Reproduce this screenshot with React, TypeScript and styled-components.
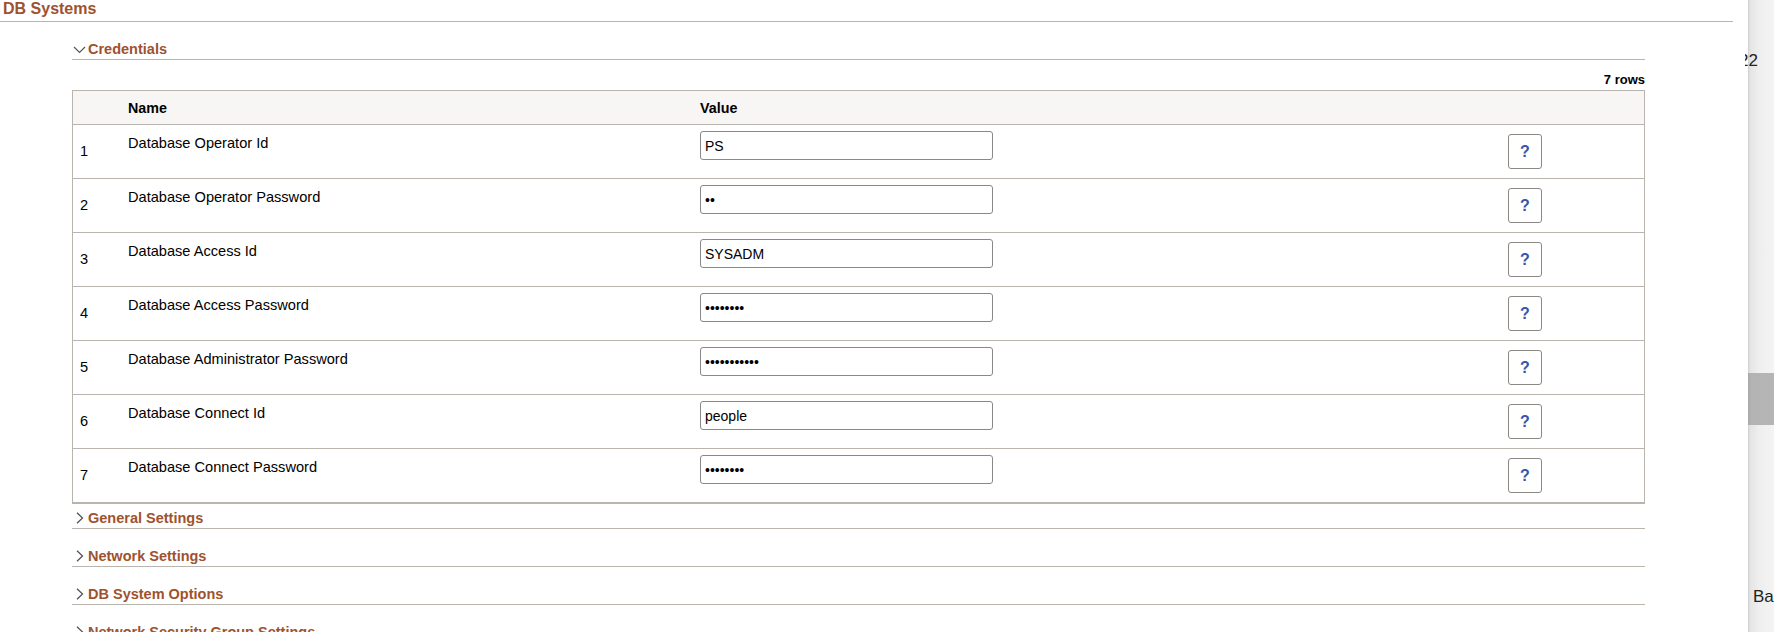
import React from "react";
import styled, { createGlobalStyle } from "styled-components";

const GlobalStyle = createGlobalStyle`
  html, body, #root { height: 100%; margin: 0; }
  body {
    font-family: "Liberation Sans", Arial, sans-serif;
    background: #ffffff;
    color: #000000;
    overflow: hidden;
  }
  * { box-sizing: border-box; }
`;

const BROWN = "#9e522e";
const LINE = "#b9b4ad";

const Page = styled.div`
  display: flex;
  height: 100%;
`;

const Main = styled.main`
  flex: 1;
  min-width: 0;
  padding-right: 15px;
`;

const PageTitle = styled.h1`
  margin: 0;
  padding: 0 0 3px 3px;
  font-size: 16px;
  line-height: 18px;
  font-weight: 700;
  color: ${BROWN};
  border-bottom: 1px solid ${LINE};
`;

const Sections = styled.div`
  margin: 0 88px 0 72px;
`;

const SectionHeader = styled.div<{ $tight?: boolean }>`
  display: flex;
  align-items: center;
  margin-top: ${(p) => (p.$tight ? "6px" : "19px")};
  padding-bottom: 2px;
  border-bottom: 1px solid ${LINE};
  font-size: 14.5px;
  line-height: 16px;
  font-weight: 700;
  color: ${BROWN};
  cursor: pointer;
`;

const Chevron = styled.svg`
  width: 16px;
  height: 16px;
  flex: none;
`;

const RowCount = styled.div`
  margin-top: 12px;
  text-align: right;
  font-size: 13px;
  line-height: 15px;
  font-weight: 700;
`;

const Grid = styled.div`
  margin-top: 3px;
  border: 1px solid ${LINE};
`;

const GridRow = styled.div<{ $head?: boolean }>`
  display: grid;
  grid-template-columns: 47px 572px 1fr 144px;
  height: ${(p) => (p.$head ? "34px" : "54px")};
  border-bottom: 1px solid ${LINE};
  background: ${(p) => (p.$head ? "#f7f6f4" : "#ffffff")};
`;

const HeadCell = styled.div`
  align-self: center;
  padding: 0 8px;
  font-size: 14.3px;
  line-height: 16px;
  font-weight: 700;
`;

const NumCell = styled.div`
  align-self: center;
  padding: 0 7px;
  font-size: 14.6px;
  line-height: 17px;
`;

const NameCell = styled.div`
  padding: 10px 8px 0;
  font-size: 14.6px;
  line-height: 17px;
`;

const ValueCell = styled.div`
  padding: 6px 8px 0;
`;

const HelpCell = styled.div`
  align-self: center;
  padding: 0 8px;
  display: flex;
`;

const Field = styled.input`
  width: 293px;
  height: 29px;
  border: 1px solid #888888;
  border-radius: 3px;
  padding: 0 4px;
  font-family: "Liberation Sans", Arial, sans-serif;
  font-size: 14px;
  color: #000;
  background: #fff;
  outline: none;
`;

const HelpButton = styled.button`
  width: 34px;
  height: 35px;
  border: 1px solid #8c8782;
  border-radius: 3px;
  background: #ffffff;
  color: #3d52a8;
  font-family: "Liberation Sans", Arial, sans-serif;
  font-size: 16px;
  font-weight: 700;
  padding: 0;
  cursor: pointer;
`;

const SidePanel = styled.aside`
  width: 26px;
  flex: none;
  display: flex;
  flex-direction: column;
  background: linear-gradient(to right, #cdcdcd 0, #e4e4e4 2px, #eeeeee 40%, #f4f4f4 100%);
`;

const SideLabel = styled.div<{ $top: number; $left: number; $clip?: number }>`
  margin-top: ${(p) => p.$top}px;
  margin-left: ${(p) => p.$left}px;
  font-size: 17px;
  line-height: 20px;
  color: #222;
  white-space: nowrap;
  clip-path: ${(p) => (p.$clip ? `inset(0 0 0 ${p.$clip}px)` : "none")};
`;

const Thumb = styled.div`
  margin-top: 302px;
  height: 52px;
  background: linear-gradient(to right, #a9a9a9 0, #b3b3b3 3px, #b5b5b5 100%);
`;

const ChevronDown = () => (
  <Chevron viewBox="0 0 16 16">
    <polyline points="2,6 7.5,11.4 13,6" fill="none" stroke="#555" strokeWidth="1.2" />
  </Chevron>
);

const ChevronRight = () => (
  <Chevron viewBox="0 0 16 16">
    <polyline points="5,2.7 10.5,8 5,13.3" fill="none" stroke="#555" strokeWidth="1.3" />
  </Chevron>
);

type Cred = { name: string; value: string; secret?: boolean };

const creds: Cred[] = [
  { name: "Database Operator Id", value: "PS" },
  { name: "Database Operator Password", value: "ab", secret: true },
  { name: "Database Access Id", value: "SYSADM" },
  { name: "Database Access Password", value: "abcdefgh", secret: true },
  { name: "Database Administrator Password", value: "abcdefghijk", secret: true },
  { name: "Database Connect Id", value: "people" },
  { name: "Database Connect Password", value: "abcdefgh", secret: true },
];

const collapsed = [
  "General Settings",
  "Network Settings",
  "DB System Options",
  "Network Security Group Settings",
];

export default function App() {
  return (
    <>
      <GlobalStyle />
      <Page>
        <Main>
          <PageTitle>DB Systems</PageTitle>
          <Sections>
            <SectionHeader>
              <ChevronDown />
              Credentials
            </SectionHeader>
            <RowCount>7 rows</RowCount>
            <Grid>
              <GridRow $head>
                <HeadCell />
                <HeadCell>Name</HeadCell>
                <HeadCell>Value</HeadCell>
                <HeadCell />
              </GridRow>
              {creds.map((c, i) => (
                <GridRow key={c.name}>
                  <NumCell>{i + 1}</NumCell>
                  <NameCell>{c.name}</NameCell>
                  <ValueCell>
                    <Field
                      type={c.secret ? "password" : "text"}
                      defaultValue={c.value}
                      aria-label={c.name}
                    />
                  </ValueCell>
                  <HelpCell>
                    <HelpButton type="button" aria-label={`Help for ${c.name}`}>?</HelpButton>
                  </HelpCell>
                </GridRow>
              ))}
            </Grid>
            {collapsed.map((label, i) => (
              <SectionHeader key={label} $tight={i === 0}>
                <ChevronRight />
                {label}
              </SectionHeader>
            ))}
          </Sections>
        </Main>
        <SidePanel>
          <SideLabel $top={51} $left={-9} $clip={6}>22</SideLabel>
          <Thumb />
          <SideLabel $top={162} $left={5}>Ba</SideLabel>
        </SidePanel>
      </Page>
    </>
  );
}
